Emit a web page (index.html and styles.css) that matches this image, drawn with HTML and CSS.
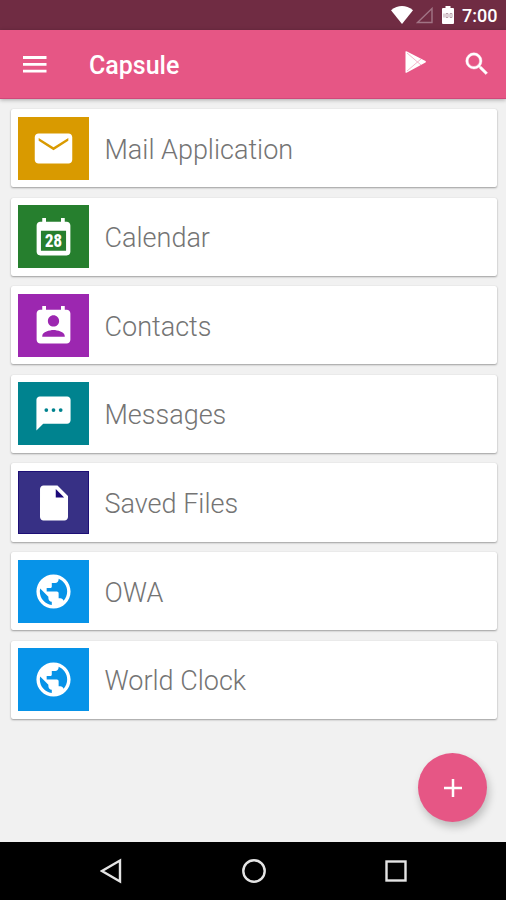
FILE: index.html
```html
<!DOCTYPE html>
<html lang="en">
<head>
<meta charset="utf-8">
<title>Capsule</title>
<link rel="stylesheet" href="styles.css">
</head>
<body>
<div class="screen">
  <div class="status">
    <svg class="wifi" width="22" height="18" viewBox="0 0 22 18"><path d="M11 18 0 4.200Q11-4 22 4.200Z" fill="#fff"/></svg>
    <svg class="signal" width="18" height="17" viewBox="0 0 18 17"><path d="M1.500 15.500H16V1.500Z" fill="none" stroke="#a17485" stroke-width="1.400"/></svg>
    <svg class="battery" width="12" height="18" viewBox="0 0 12 18"><path d="M3.500 0h5v2H11q1 0 1 1v14q0 1-1 1H1q-1 0-1-1V3q0-1 1-1h2.500Z" fill="#fff"/><path d="M2 7.500v4M4 7.500h2v4H4zM8 7.500h2v4H8z" fill="none" stroke="#a88c98" stroke-width=".8"/></svg>
    <span class="time">7:00</span>
  </div>
  <header class="bar">
    <svg class="menu" width="24" height="17" viewBox="0 0 24 17"><path d="M0 1.500h23.500M0 8.300h23.500M0 15.100h23.500" stroke="#fff" stroke-width="2.800"/></svg>
    <h1>Capsule</h1>
    <svg class="play" width="22" height="22" viewBox="0 0 22 22"><path d="M.5.500Q1 0 2 .6L20.500 10q1 .8 0 1.600L2 21.400Q1 22 .5 21.500Z" fill="#fff"/><path d="M2 2 16 14M2 20 16 8" stroke="#f0a5bf" stroke-width=".8"/></svg>
    <svg class="search" width="30" height="30" viewBox="0 0 24 24"><path fill="#fff" stroke="#fff" stroke-width=".3" d="M15.500 14h-.79l-.28-.27A6.471 6.471 0 0 0 16 9.500 6.500 6.500 0 1 0 9.500 16c1.610 0 3.090-.59 4.230-1.570l.27.28v.79l5 4.990L20.490 19l-4.990-5zm-6 0C7.010 14 5 11.990 5 9.500S7.010 5 9.500 5 14 7.010 14 9.500 11.990 14 9.500 14z"/></svg>
  </header>
  <main class="list">
    <div class="card"><div class="tile mail"><svg width="45" height="45" viewBox="0 0 24 24"><path d="M20 4H4c-1.100 0-1.990.9-1.990 2L2 18c0 1.100.9 2 2 2h16c1.100 0 2-.9 2-2V6c0-1.100-.9-2-2-2zm-.1 3.900L12 12.900 4.100 7.900 4.100 6.400 12 11.300l7.900-4.900z"/></svg></div><span>Mail Application</span></div>
    <div class="card"><div class="tile calendar"><svg width="45" height="45" viewBox="0 0 24 24"><path fill-rule="evenodd" d="M19 3h-1V1h-2v2H8V1H6v2H5c-1.100 0-2 .9-2 2v14c0 1.100.9 2 2 2h14c1.100 0 2-.9 2-2V5c0-1.100-.9-2-2-2zM5.300 7.800h13.400V18.500H5.300z"/><text x="12" y="16.600" textLength="9" lengthAdjust="spacingAndGlyphs">28</text></svg></div><span>Calendar</span></div>
    <div class="card"><div class="tile contacts"><svg width="45" height="45" viewBox="0 0 24 24"><path d="M19 3h-1V1h-2v2H8V1H6v2H5c-1.110 0-2 .9-2 2v14c0 1.100.89 2 2 2h14c1.100 0 2-.9 2-2V5c0-1.100-.9-2-2-2zm-7 3c1.660 0 3 1.340 3 3s-1.340 3-3 3-3-1.340-3-3 1.340-3 3-3zm6 11.500H6v-.5c0-2 4-3.100 6-3.100s6 1.100 6 3.100v.5z"/></svg></div><span>Contacts</span></div>
    <div class="card"><div class="tile messages"><svg width="41" height="41" viewBox="0 0 24 24"><path fill-rule="evenodd" d="M20 2H4c-1.100 0-1.990.9-1.990 2L2 22l4-4h14c1.100 0 2-.9 2-2V4c0-1.100-.9-2-2-2z"/><g class="dots"><circle cx="7.800" cy="10" r="1.100"/><circle cx="12" cy="10" r="1.100"/><circle cx="16.200" cy="10" r="1.100"/></g></svg></div><span>Messages</span></div>
    <div class="card"><div class="tile files"><svg width="42" height="42" viewBox="0 0 24 24"><path d="M6 2c-1.100 0-1.990.9-1.990 2L4 20c0 1.100.89 2 1.990 2H18c1.100 0 2-.9 2-2V8l-6-6H6z"/><path class="fold" d="M13 4v4.800h4.800z"/></svg></div><span>Saved Files</span></div>
    <div class="card"><div class="tile web"><svg width="41" height="41" viewBox="0 0 24 24"><path d="M12 2C6.480 2 2 6.480 2 12s4.480 10 10 10 10-4.480 10-10S17.520 2 12 2zm-1 17.930c-3.950-.49-7-3.850-7-7.930 0-.62.080-1.210.21-1.790L9 15v1c0 1.100.9 2 2 2v1.930zm6.900-2.540c-.26-.81-1-1.390-1.900-1.390h-1v-3c0-.55-.45-1-1-1H8v-2h2c.55 0 1-.45 1-1V7h2c1.100 0 2-.9 2-2v-.41c2.930 1.190 5 4.060 5 7.410 0 2.080-.8 3.970-2.100 5.390z"/></svg></div><span>OWA</span></div>
    <div class="card"><div class="tile web"><svg width="41" height="41" viewBox="0 0 24 24"><path d="M12 2C6.480 2 2 6.480 2 12s4.480 10 10 10 10-4.480 10-10S17.520 2 12 2zm-1 17.930c-3.950-.49-7-3.850-7-7.930 0-.62.080-1.210.21-1.790L9 15v1c0 1.100.9 2 2 2v1.930zm6.900-2.540c-.26-.81-1-1.390-1.900-1.390h-1v-3c0-.55-.45-1-1-1H8v-2h2c.55 0 1-.45 1-1V7h2c1.100 0 2-.9 2-2v-.41c2.930 1.190 5 4.060 5 7.410 0 2.080-.8 3.970-2.100 5.390z"/></svg></div><span>World Clock</span></div>
  </main>
  <button class="fab" aria-label="Add"><svg width="18" height="18" viewBox="0 0 18 18"><path d="M9 0v18M0 9h18" stroke="#fff" stroke-width="2.500"/></svg></button>
  <nav class="nav">
    <svg width="22" height="26" viewBox="0 0 22 26"><path d="M20 2.500v21L2 13Z"/></svg>
    <svg width="26" height="26" viewBox="0 0 26 26"><circle cx="13" cy="13" r="10.700"/></svg>
    <svg width="22" height="22" viewBox="0 0 22 22"><rect x="1.500" y="1.500" width="19" height="19"/></svg>
  </nav>
</div>
</body>
</html>
```
FILE: styles.css
```css
* { box-sizing: border-box; }
body { margin: 0; font-family: Roboto, sans-serif; }
svg { display: block; flex: none; }
.screen {
  position: relative;
  display: flex;
  flex-direction: column;
  width: 506px;
  height: 900px;
  overflow: hidden;
  background: #f1f1f1;
}
.status {
  display: flex;
  align-items: center;
  justify-content: flex-end;
  height: 30px;
  padding-right: 9px;
  background: #702c43;
}
.signal { margin-left: 3px; }
.battery { margin-left: 8px; }
.time {
  width: 35px;
  margin-left: 8px;
  color: #fff;
  font-size: 18px;
  font-weight: 500;
  line-height: 30px;
  padding-top: 1px;
  white-space: nowrap;
}
.bar {
  z-index: 1;
  display: flex;
  align-items: center;
  height: 69px;
  padding: 0 14px 0 23px;
  background: #e65685;
  border-bottom: 1px solid #d0487a;
  box-shadow: 0 1px 4px rgba(0, 0, 0, .3);
}
h1 {
  flex: 1;
  margin: 4px 0 0 42px;
  color: #fff;
  font-size: 25px;
  font-weight: 500;
  line-height: 30px;
}
.play { margin: -4px 35px 0 0; }
.list {
  display: flex;
  flex-direction: column;
  gap: 10.300px;
  padding: 10px 9px 0 11px;
}
.card {
  display: flex;
  align-items: center;
  height: 78.300px;
  padding: 0 7px;
  background: #fff;
  border-radius: 2px;
  box-shadow: 0 1px 2px rgba(0, 0, 0, .34), 0 0 1px rgba(0, 0, 0, .12);
}
.card span {
  margin-left: 15.500px;
  padding-top: 3px;
  color: #747474;
  font-size: 27px;
  font-weight: 300;
  line-height: 34px;
}
.tile {
  display: flex;
  align-items: center;
  justify-content: center;
  width: 71px;
  height: 63px;
  fill: #fff;
}
.mail { background: #d99a00; }
.calendar { background: #267f2e; }
.calendar svg { margin-top: 3px; }
.calendar text {
  font-family: Roboto, sans-serif;
  font-size: 9.500px;
  font-weight: 900;
  text-anchor: middle;
}
.contacts { background: #9c27b0; }
.contacts svg { margin-top: 2px; }
.messages { background: #00838f; }
.dots { fill: #00838f; }
.files { background: #373085; border: 1px solid #1d0f76; }
.fold { fill: #1a0878; }
.web { background: #0793e8; }
.fab {
  position: absolute;
  left: 418px;
  top: 753px;
  display: flex;
  align-items: center;
  justify-content: center;
  width: 69px;
  height: 69px;
  padding: 0;
  border: 0;
  border-radius: 50%;
  background: #e65685;
  box-shadow: 2px 5px 8px rgba(0, 0, 0, .22);
}
.nav {
  display: flex;
  align-items: center;
  justify-content: space-between;
  height: 58px;
  margin-top: auto;
  padding: 0 99px 0 100px;
  background: #000;
  fill: none;
  stroke: #e4e4e4;
  stroke-width: 2.400;
}
```
